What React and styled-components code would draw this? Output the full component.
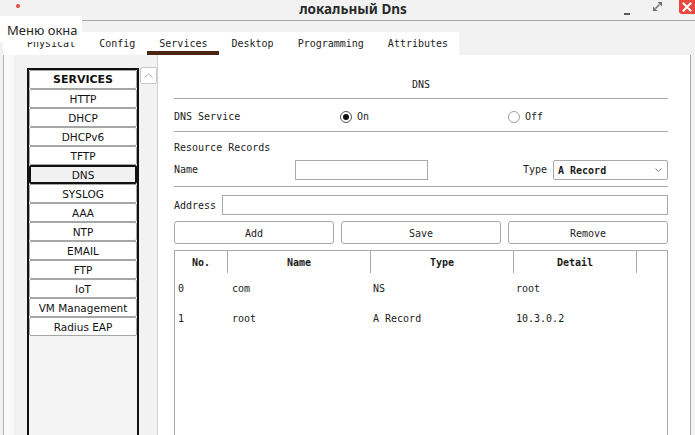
import React from "react";
import styled, { createGlobalStyle } from "styled-components";

const Global = createGlobalStyle`
  html, body { margin: 0; padding: 0; }
  body { background: #f2f2f2; overflow: hidden; }
  * { box-sizing: border-box; }
`;

const MONO = `"DejaVu Sans Mono", "Liberation Mono", monospace`;
const SANS = `"Noto Sans", "Open Sans", sans-serif`;

const Page = styled.div`
  position: relative;
  width: 695px;
  height: 435px;
  overflow: hidden;
  background: #f2f2f2;
  display: flex;
  flex-direction: column;
`;

const TitleBar = styled.div`
  height: 21px;
  flex: none;
  display: grid;
  grid-template-columns: 1fr auto 1fr;
  border-bottom: 1px solid #a9a9a9;
  background: #f2f2f2;
`;

const Dot = styled.span`
  display: block;
  width: 4px;
  height: 4px;
  border-radius: 50%;
  background: #e5483f;
  margin: 4px 0 0 16px;
`;

const Title = styled.div`
  font-family: ${SANS};
  font-weight: 700;
  font-size: 13.5px;
  line-height: 19px;
  color: #2b2b2b;
  padding-left: 11px;
`;

const Controls = styled.div`
  justify-self: end;
  display: flex;
  align-items: flex-start;
  height: 20px;
`;

const Minimize = styled.span`
  display: block;
  width: 6px;
  height: 2px;
  background: #5a5a5a;
  margin: 13px 23px 0 0;
`;

const MaxIcon = styled.svg`
  display: block;
  margin: 2px 17px 0 0;
`;

const Close = styled.div`
  width: 16px;
  height: 14px;
  background: #e9463d;
  border-radius: 0 0 0 3px;
  display: flex;
  align-items: center;
  justify-content: center;
`;

const Tooltip = styled.div`
  position: absolute;
  left: 0;
  top: 16px;
  width: 82px;
  height: 26px;
  background: #ffffff;
  font-family: ${SANS};
  font-size: 13px;
  line-height: 23px;
  color: #262626;
  padding: 3px 0 0 7px;
  z-index: 5;
`;

const TabStrip = styled.div`
  margin: 11px 0 0 3px;
  width: 456px;
  height: 23px;
  background: #ffffff;
  display: flex;
  padding-left: 12px;
  flex: none;
`;

const Tab = styled.div`
  font-family: ${MONO};
  font-size: 10px;
  line-height: 22px;
  padding: 1px 12px 0;
  color: #222;
  box-shadow: ${(p) => (p.$active ? "inset 0 -4px 0 #4a2612" : "none")};
`;

const Body = styled.div`
  flex: 1;
  display: flex;
  min-height: 0;
`;

const FrameEdge = styled.div`
  margin-left: 3px;
  width: 11px;
  border-left: 1px solid #b3b3b3;
  background: #f9f9f9;
`;

const LeftPane = styled.div`
  width: 143px;
  display: flex;
  gap: 1px;
  padding: 13px 0 0 13px;
  background: #f2f2f2;
`;

const ListBox = styled.div`
  width: 112px;
  border: 2px solid #111;
  border-bottom: none;
  background: #f4f4f4;
  display: flex;
  flex-direction: column;
`;

const Item = styled.div`
  height: 19px;
  border: ${(p) => (p.$selected ? "2px solid #111" : "1px solid #a6a6a6")};
  border-radius: 2px;
  background: ${(p) => (p.$selected ? "#f1f1f1" : "#ffffff")};
  font-family: "DejaVu Sans", Verdana, sans-serif;
  font-size: ${(p) => (p.$header ? "11px" : "10.5px")};
  font-weight: ${(p) => (p.$header ? 700 : 400)};
  color: #111;
  display: flex;
  align-items: center;
  justify-content: center;
  white-space: nowrap;
`;

const ScrollCol = styled.div`
  width: 17px;
  display: flex;
  flex-direction: column;
  margin-top: -1px;
`;

const ScrollBtn = styled.div`
  height: 17px;
  border: 1px solid #c6c6c6;
  border-radius: 2px;
  background: #ffffff;
  display: flex;
  align-items: center;
  justify-content: center;
`;

const RightPane = styled.div`
  width: 534px;
  background: #ffffff;
  border-left: 1px solid #d4d4d4;
  border-right: 1px solid #a9a9a9;
  padding: 0 22px 0 16px;
  display: flex;
  flex-direction: column;
  font-family: ${MONO};
  font-size: 10px;
  color: #1c1c1c;
`;

const SectionTitle = styled.div`
  height: 44px;
  flex: none;
  display: flex;
  align-items: flex-end;
  justify-content: center;
  padding-bottom: 6px;
  line-height: 14px;
  border-bottom: 1px solid #a9a9a9;
`;

const ServiceRow = styled.div`
  height: 33px;
  flex: none;
  display: grid;
  grid-template-columns: 166px 168px 1fr;
  align-items: center;
  padding-top: 3px;
  border-bottom: 1px solid #a9a9a9;
`;

const RadioLabel = styled.label`
  display: flex;
  align-items: center;
  gap: 5px;
`;

const Radio = styled.span`
  width: 12px;
  height: 12px;
  border-radius: 50%;
  border: 1px solid ${(p) => (p.$on ? "#555" : "#a0a0a0")};
  background: #fff;
  display: flex;
  align-items: center;
  justify-content: center;
  &::after {
    content: "";
    width: 6px;
    height: 6px;
    border-radius: 50%;
    background: ${(p) => (p.$on ? "#111" : "transparent")};
  }
`;

const SubTitle = styled.div`
  height: 25px;
  flex: none;
  padding-top: 9px;
  line-height: 14px;
`;

const NameRow = styled.div`
  height: 30px;
  flex: none;
  display: flex;
  align-items: flex-start;
  padding-top: 3px;
  border-bottom: 1px solid #a9a9a9;
`;

const FieldLabel = styled.span`
  width: ${(p) => p.$w || "auto"};
  height: 20px;
  line-height: ${(p) => (p.$low ? "18px" : "20px")};
  padding-top: ${(p) => (p.$low ? "2px" : "0")};
  flex: none;
`;

const TextInput = styled.div`
  width: ${(p) => p.$w || "auto"};
  flex: ${(p) => (p.$grow ? 1 : "none")};
  height: 20px;
  border: 1px solid #a9a9a9;
  background: #fff;
`;

const Spacer = styled.div`
  flex: 1;
`;

const Select = styled.div`
  width: 115px;
  height: 20px;
  margin-left: 6px;
  border: 1px solid #a9a9a9;
  border-radius: 2px;
  display: flex;
  align-items: center;
  justify-content: space-between;
  padding: 0 5px 0 4px;
  font-weight: 700;
`;

const AddressRow = styled.div`
  margin-top: 8px;
  height: 20px;
  display: flex;
  align-items: flex-start;
  gap: 6px;
  flex: none;
`;

const ButtonRow = styled.div`
  margin-top: 6px;
  display: grid;
  grid-template-columns: 1fr 1fr 1fr;
  gap: 7px;
  flex: none;
`;

const Button = styled.div`
  height: 23px;
  border: 1px solid #a9a9a9;
  border-radius: 3px;
  background: #fff;
  display: flex;
  align-items: center;
  justify-content: center;
  padding-top: 2px;
`;

const Table = styled.div`
  margin-top: 6px;
  flex: 1;
  border: 1px solid #a9a9a9;
  border-bottom: none;
`;

const Row = styled.div`
  display: grid;
  grid-template-columns: 53px 143px 143px 123px 1fr;
  height: ${(p) => (p.$head ? "22px" : "30px")};
`;

const HeadCell = styled.div`
  font-weight: 700;
  display: flex;
  align-items: center;
  justify-content: center;
  border-right: ${(p) => (p.$last ? "none" : "1px solid #a9a9a9")};
`;

const Cell = styled.div`
  display: flex;
  align-items: center;
  padding-left: ${(p) => p.$pl || "3px"};
`;

const services = [
  "HTTP", "DHCP", "DHCPv6", "TFTP", "DNS", "SYSLOG", "AAA", "NTP",
  "EMAIL", "FTP", "IoT", "VM Management", "Radius EAP",
];

const tabs = ["Physical", "Config", "Services", "Desktop", "Programming", "Attributes"];

const records = [
  ["0", "com", "NS", "root"],
  ["1", "root", "A Record", "10.3.0.2"],
];

export default function App() {
  return (
    <Page>
      <Global />
      <TitleBar>
        <Dot />
        <Title>локальный Dns</Title>
        <Controls>
          <Minimize />
          <MaxIcon width="9" height="9" viewBox="0 0 9 9">
            <line x1="2.5" y1="6.5" x2="6.5" y2="2.5" stroke="#6e6e6e" strokeWidth="1.4" />
            <polygon points="4.5,0 9,0 9,4.5" fill="#6e6e6e" />
            <polygon points="0,4.5 0,9 4.5,9" fill="#6e6e6e" />
          </MaxIcon>
          <Close>
            <svg width="10" height="10" viewBox="0 0 10 10">
              <path d="M1.5 1.5 L8.5 8.5 M8.5 1.5 L1.5 8.5" stroke="#fff" strokeWidth="2" strokeLinecap="square" />
            </svg>
          </Close>
        </Controls>
      </TitleBar>
      <Tooltip>Меню окна</Tooltip>
      <TabStrip>
        {tabs.map((t) => (
          <Tab key={t} $active={t === "Services"}>{t}</Tab>
        ))}
      </TabStrip>
      <Body>
        <FrameEdge />
        <LeftPane>
          <ListBox>
            <Item $header>SERVICES</Item>
            {services.map((s) => (
              <Item key={s} $selected={s === "DNS"}>{s}</Item>
            ))}
          </ListBox>
          <ScrollCol>
            <ScrollBtn>
              <svg width="9" height="5" viewBox="0 0 9 5">
                <path d="M0.5 4.5 L4.5 0.8 L8.5 4.5" fill="none" stroke="#a8a8a8" strokeWidth="1" />
              </svg>
            </ScrollBtn>
          </ScrollCol>
        </LeftPane>
        <RightPane>
          <SectionTitle>DNS</SectionTitle>
          <ServiceRow>
            <span>DNS Service</span>
            <RadioLabel><Radio $on />On</RadioLabel>
            <RadioLabel><Radio />Off</RadioLabel>
          </ServiceRow>
          <SubTitle>Resource Records</SubTitle>
          <NameRow>
            <FieldLabel $w="121px">Name</FieldLabel>
            <TextInput $w="133px" />
            <Spacer />
            <FieldLabel>Type</FieldLabel>
            <Select>
              <span>A Record</span>
              <svg width="7" height="4" viewBox="0 0 7 4">
                <path d="M0.5 0.5 L3.5 3.5 L6.5 0.5" fill="none" stroke="#777" strokeWidth="1" />
              </svg>
            </Select>
          </NameRow>
          <AddressRow>
            <FieldLabel $low>Address</FieldLabel>
            <TextInput $grow />
          </AddressRow>
          <ButtonRow>
            <Button>Add</Button>
            <Button>Save</Button>
            <Button>Remove</Button>
          </ButtonRow>
          <Table>
            <Row $head>
              <HeadCell>No.</HeadCell>
              <HeadCell>Name</HeadCell>
              <HeadCell>Type</HeadCell>
              <HeadCell>Detail</HeadCell>
              <HeadCell $last />
            </Row>
            {records.map((r) => (
              <Row key={r[0]}>
                <Cell $pl="3px">{r[0]}</Cell>
                <Cell $pl="4px">{r[1]}</Cell>
                <Cell $pl="2px">{r[2]}</Cell>
                <Cell $pl="2px">{r[3]}</Cell>
                <Cell />
              </Row>
            ))}
          </Table>
        </RightPane>
      </Body>
    </Page>
  );
}
